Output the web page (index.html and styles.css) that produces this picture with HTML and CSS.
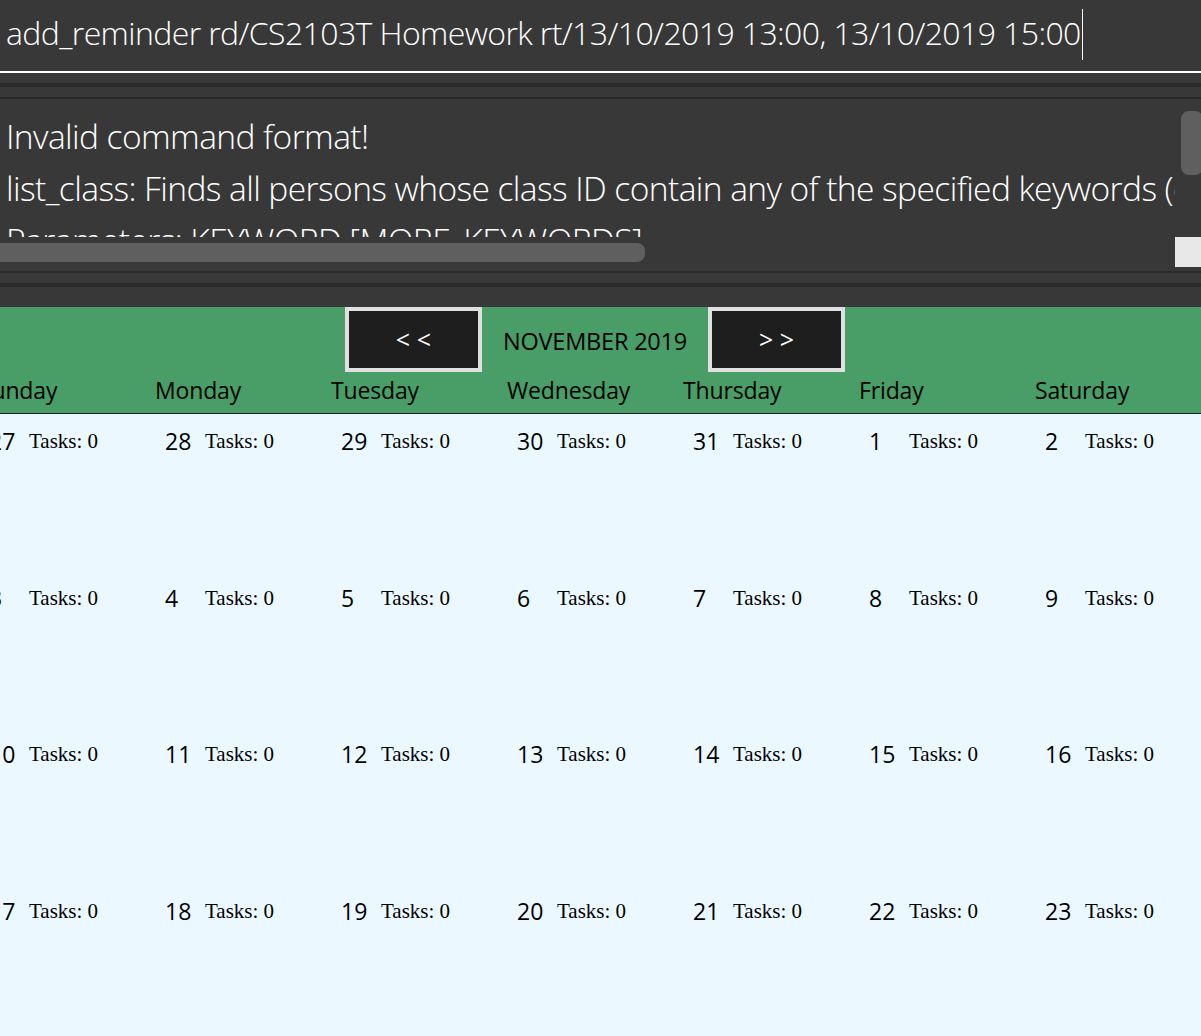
FILE: index.html
```html
<!DOCTYPE html>
<html>
<head>
<meta charset="utf-8">
<link rel="stylesheet" href="styles.css">
</head>
<body>
<div class="app">
  <div class="command">
    <span class="cmd-text">add_reminder rd/CS2103T Homework rt/13/10/2019 13:00, 13/10/2019 15:00</span><span class="caret"></span>
  </div>
  <div class="gap g1"></div>
  <div class="rule r4"></div>
  <div class="gap g2"></div>
  <div class="rule r2"></div>
  <div class="result">
    <div class="result-view">
      <div class="result-text">
        <div class="line">Invalid command format!</div>
        <div class="line">list_class: Finds all persons whose class ID contain any of the specified keywords (case-insensitive) and displays them as a list with index numbers.</div>
        <div class="line">Parameters: KEYWORD [MORE_KEYWORDS]</div>
      </div>
      <div class="vbar"><div class="vthumb"></div></div>
    </div>
    <div class="hbar-row">
      <div class="hbar"><div class="hthumb"></div></div>
      <div class="corner"></div>
    </div>
  </div>
  <div class="rule r2"></div>
  <div class="gap g3"></div>
  <div class="rule r4"></div>
  <div class="gap g4"></div>

  <div class="calendar">
    <div class="cal-head">
      <div class="month-row">
        <div class="nav-btn">&lt; &lt;</div>
        <div class="month">NOVEMBER 2019</div>
        <div class="nav-btn">&gt; &gt;</div>
      </div>
      <div class="days">
        <div class="dname">Sunday</div>
        <div class="dname">Monday</div>
        <div class="dname">Tuesday</div>
        <div class="dname">Wednesday</div>
        <div class="dname">Thursday</div>
        <div class="dname">Friday</div>
        <div class="dname">Saturday</div>
      </div>
    </div>
    <div class="grid">
      <div class="cell"><span class="num">27</span><span class="tasks">Tasks: 0</span></div>
      <div class="cell"><span class="num">28</span><span class="tasks">Tasks: 0</span></div>
      <div class="cell"><span class="num">29</span><span class="tasks">Tasks: 0</span></div>
      <div class="cell"><span class="num">30</span><span class="tasks">Tasks: 0</span></div>
      <div class="cell"><span class="num">31</span><span class="tasks">Tasks: 0</span></div>
      <div class="cell"><span class="num">1</span><span class="tasks">Tasks: 0</span></div>
      <div class="cell"><span class="num">2</span><span class="tasks">Tasks: 0</span></div>

      <div class="cell"><span class="num">3</span><span class="tasks">Tasks: 0</span></div>
      <div class="cell"><span class="num">4</span><span class="tasks">Tasks: 0</span></div>
      <div class="cell"><span class="num">5</span><span class="tasks">Tasks: 0</span></div>
      <div class="cell"><span class="num">6</span><span class="tasks">Tasks: 0</span></div>
      <div class="cell"><span class="num">7</span><span class="tasks">Tasks: 0</span></div>
      <div class="cell"><span class="num">8</span><span class="tasks">Tasks: 0</span></div>
      <div class="cell"><span class="num">9</span><span class="tasks">Tasks: 0</span></div>

      <div class="cell"><span class="num">10</span><span class="tasks">Tasks: 0</span></div>
      <div class="cell"><span class="num">11</span><span class="tasks">Tasks: 0</span></div>
      <div class="cell"><span class="num">12</span><span class="tasks">Tasks: 0</span></div>
      <div class="cell"><span class="num">13</span><span class="tasks">Tasks: 0</span></div>
      <div class="cell"><span class="num">14</span><span class="tasks">Tasks: 0</span></div>
      <div class="cell"><span class="num">15</span><span class="tasks">Tasks: 0</span></div>
      <div class="cell"><span class="num">16</span><span class="tasks">Tasks: 0</span></div>

      <div class="cell"><span class="num">17</span><span class="tasks">Tasks: 0</span></div>
      <div class="cell"><span class="num">18</span><span class="tasks">Tasks: 0</span></div>
      <div class="cell"><span class="num">19</span><span class="tasks">Tasks: 0</span></div>
      <div class="cell"><span class="num">20</span><span class="tasks">Tasks: 0</span></div>
      <div class="cell"><span class="num">21</span><span class="tasks">Tasks: 0</span></div>
      <div class="cell"><span class="num">22</span><span class="tasks">Tasks: 0</span></div>
      <div class="cell"><span class="num">23</span><span class="tasks">Tasks: 0</span></div>

      <div class="cell"><span class="num">24</span><span class="tasks">Tasks: 0</span></div>
      <div class="cell"><span class="num">25</span><span class="tasks">Tasks: 0</span></div>
      <div class="cell"><span class="num">26</span><span class="tasks">Tasks: 0</span></div>
      <div class="cell"><span class="num">27</span><span class="tasks">Tasks: 0</span></div>
      <div class="cell"><span class="num">28</span><span class="tasks">Tasks: 0</span></div>
      <div class="cell"><span class="num">29</span><span class="tasks">Tasks: 0</span></div>
      <div class="cell"><span class="num">30</span><span class="tasks">Tasks: 0</span></div>
    </div>
  </div>
</div>
</body>
</html>
```
FILE: styles.css
```css
html, body {
  margin: 0;
  padding: 0;
  background: #383838;
  overflow: hidden;
  height: 1036px;
}

.app {
  width: 1201px;
  height: 1036px;
  overflow: hidden;
  display: flex;
  flex-direction: column;
  font-family: "Open Sans", "Noto Sans", sans-serif;
}

.command {
  height: 71px;
  border-bottom: 2px solid #ffffff;
  display: flex;
  align-items: center;
  padding-left: 6px;
  flex: none;
  box-sizing: border-box;
  height: 73px;
  padding-bottom: 6px;
}

.cmd-text {
  color: #ffffff;
  font-weight: 300;
  font-size: 32px;
  white-space: nowrap;
  letter-spacing: -0.6px;
}

.caret {
  width: 1px;
  height: 51px;
  background: #ffffff;
  margin-left: 1px;
  margin-top: 4px;
}

.gap { flex: none; background: #383838; }
.g1 { height: 10px; }
.g2 { height: 10px; }
.g3 { height: 10px; }
.g4 { height: 20px; }

.rule { flex: none; background: #2a2a2a; }
.r4 { height: 4px; }
.r2 { height: 2px; }

.result {
  height: 172px;
  flex: none;
  display: flex;
  flex-direction: column;
}

.result-view {
  height: 138px;
  display: flex;
  overflow: hidden;
}

.result-text {
  flex: 1;
  overflow: hidden;
  padding-left: 6px;
  padding-top: 14px;
  color: #ffffff;
  font-weight: 300;
  font-size: 33.6px;
  letter-spacing: -0.6px;
}

.line {
  white-space: nowrap;
  height: 52px;
  line-height: 46px;
}

.vbar {
  width: 26px;
  flex: none;
  padding-top: 12px;
  padding-left: 6px;
  box-sizing: border-box;
}

.vthumb {
  width: 22px;
  height: 64px;
  background: #5f5f5f;
  border-radius: 8px;
}

.hbar-row {
  height: 30px;
  display: flex;
}

.hbar {
  flex: 1;
  padding-top: 6px;
}

.hthumb {
  width: 645px;
  height: 19px;
  background: #5f5f5f;
  border-radius: 0 8px 8px 0;
}

.corner {
  width: 26px;
  height: 30px;
  background: #e8e8e8;
}

.calendar {
  flex: 1;
  width: 1232px;
  margin-left: -21px;
  background: #ebf8ff;
  display: flex;
  flex-direction: column;
}

.cal-head {
  background: #499e68;
  border-bottom: 1px solid #1f1f1f;
  height: 106px;
  flex: none;
}

.month-row {
  display: flex;
  justify-content: center;
  align-items: center;
  gap: 21px;
  height: 65px;
}

.nav-btn {
  width: 129px;
  height: 57px;
  border: 4px solid #e0e0e0;
  background: #1e1e1e;
  color: #ffffff;
  font-size: 25px;
  display: flex;
  align-items: center;
  justify-content: center;
  align-self: flex-start;
  padding-bottom: 2px;
  box-sizing: content-box;
  height: 55px;
}

.month {
  font-size: 23.5px;
  color: #000000;
  letter-spacing: -0.2px;
  padding-top: 2px;
}

.days {
  display: grid;
  grid-template-columns: repeat(7, 176px);
  height: 41px;
  align-items: center;
}

.dname {
  font-size: 23px;
  color: #000000;
  letter-spacing: -0.15px;
  padding-bottom: 6px;
}

.grid {
  display: grid;
  grid-template-columns: repeat(7, 176px);
  grid-auto-rows: 156.67px;
}

.cell {
  display: flex;
  align-items: baseline;
  padding-left: 10px;
  padding-top: 10px;
}

.num {
  width: 40px;
  font-size: 23px;
  color: #000000;
  flex: none;
  position: relative;
  top: 1px;
}

.tasks {
  font-family: "Liberation Serif", serif;
  font-size: 21px;
  color: #000000;
  position: relative;
  top: -1px;
}
```
